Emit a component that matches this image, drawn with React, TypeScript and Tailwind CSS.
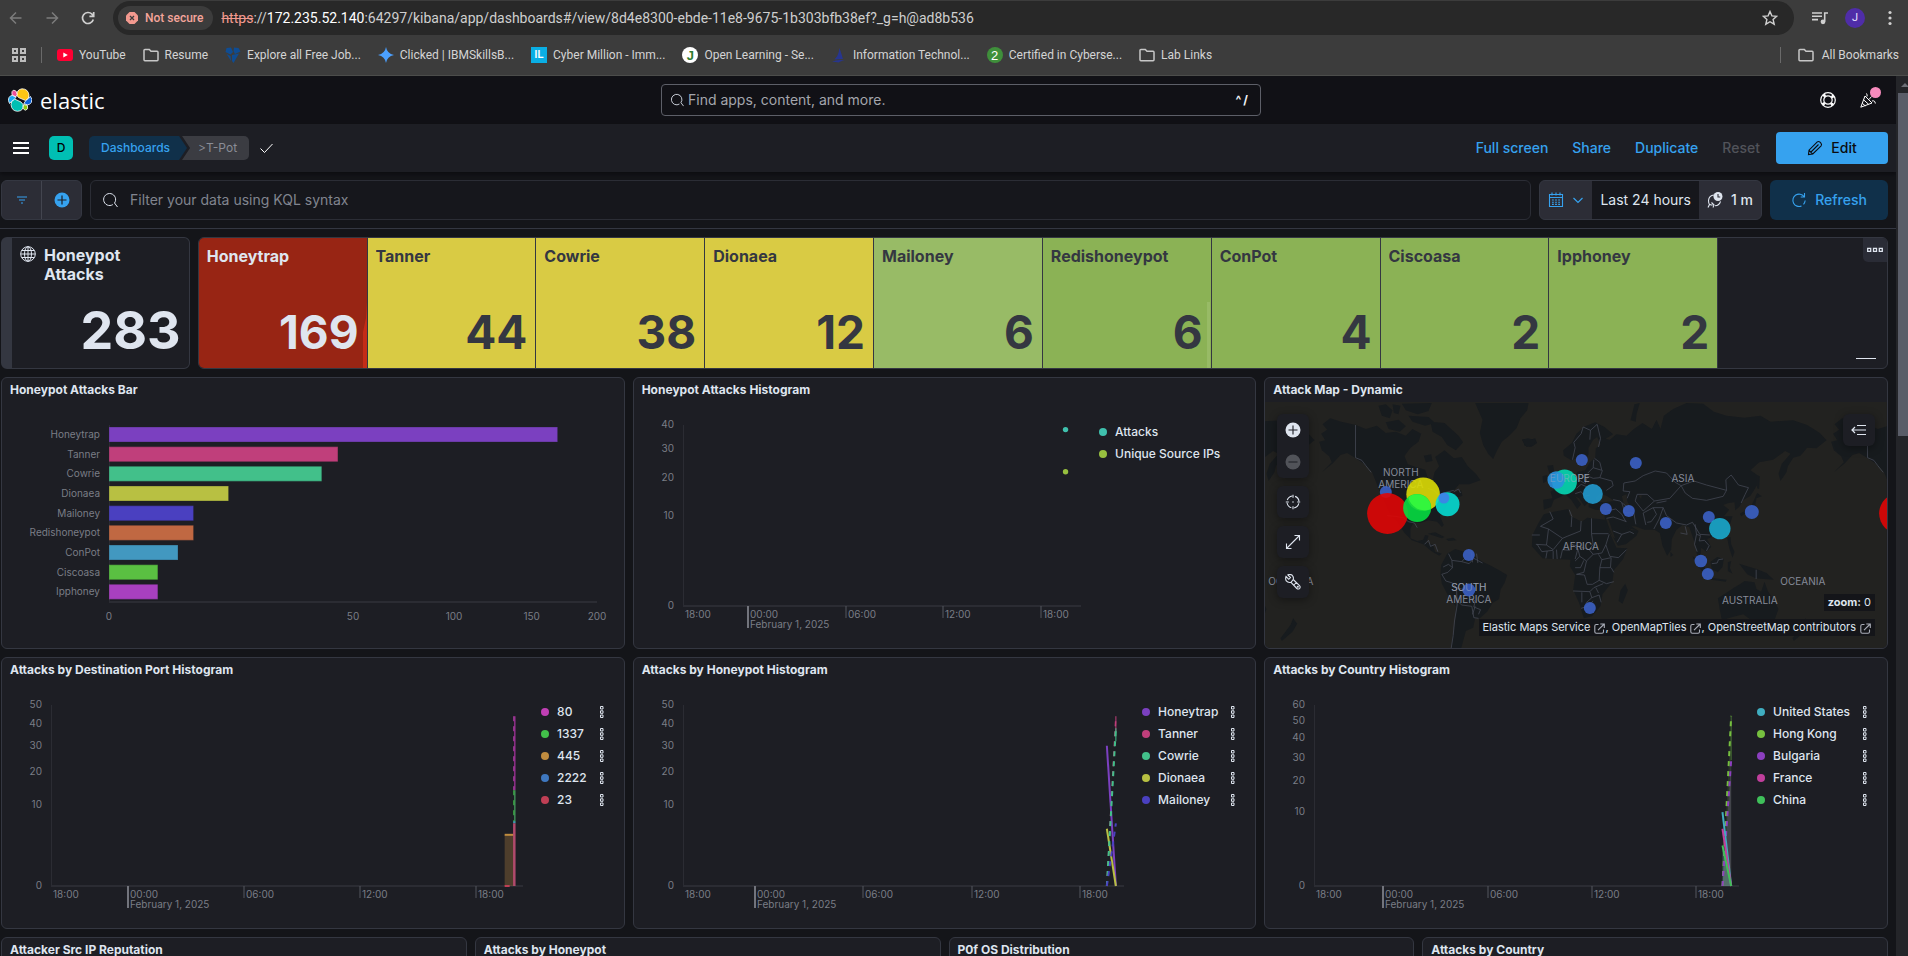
import { useLayoutEffect, useRef, useState, type ReactNode } from "react";

/* ---------- shared helpers ---------- */

function useWidth<T extends HTMLElement>(): [React.RefObject<T | null>, number] {
  const ref = useRef<T>(null);
  const [width, setWidth] = useState(0);
  useLayoutEffect(() => {
    const node = ref.current;
    if (!node) return;
    const update = () => setWidth(Math.round(node.getBoundingClientRect().width));
    update();
    const observer = new ResizeObserver(update);
    observer.observe(node);
    return () => observer.disconnect();
  }, []);
  return [ref, width];
}

function FolderIcon() {
  return (
    <svg className="h-4 w-4" viewBox="0 0 16 16" fill="none" stroke="#c7c7c7" strokeWidth="1.5">
      <path d="M1 3.2v9.6q0 .9.9.9h12.2q.9 0 .9-.9V5.2q0-.9-.9-.9H8L6.300 2.400H1.900q-.9 0-.9.8z" />
    </svg>
  );
}

function MagnifierIcon({ className }: { className: string }) {
  return (
    <svg className={className} viewBox="0 0 16 16" fill="none" stroke="#dfe5ef" strokeWidth="1">
      <path d="M10.800 12.600a6 6 0 1 1 1.700-1.600l3 4" />
    </svg>
  );
}

/* ---------- browser chrome ---------- */

const bookmarks: { label: string; icon: ReactNode }[] = [
  {
    label: "YouTube",
    icon: (
      <svg className="h-4 w-4" viewBox="0 0 16 16">
        <rect x="0" y="2" width="16" height="12" rx="3" fill="#ff0033" />
        <path d="M6.300 5.400v5.200L10.800 8z" fill="#fff" />
      </svg>
    ),
  },
  { label: "Resume", icon: <FolderIcon /> },
  {
    label: "Explore all Free Job...",
    icon: (
      <svg className="h-4 w-4" viewBox="0 0 16 16" fill="#0f4c92">
        <path d="M1.500 1 6 .5 8 5l-2.500 2.500L.5 5zM9 .5l4.500.5 2 3.500L10 7 8.500 4zM1.500 7l4 2 .5 5zM7 8l2.500-.5 4.500-1L8.500 16 7 14z" />
      </svg>
    ),
  },
  {
    label: "Clicked | IBMSkillsB...",
    icon: (
      <svg className="h-4 w-4" viewBox="0 0 16 16" fill="#4ba0ff">
        <path d="M8 0q1 6.500 8 8-7 1.500-8 8-1-6.500-8-8 7-1.500 8-8z" />
      </svg>
    ),
  },
  {
    label: "Cyber Million - Imm...",
    icon: (
      <span className="grid h-4 w-4 place-items-center bg-[#0aaee4] font-['Liberation_Sans'] text-[10px] leading-none font-bold text-white">
        IL
      </span>
    ),
  },
  {
    label: "Open Learning - Se...",
    icon: (
      <span className="grid h-4 w-4 place-items-center rounded-full bg-white font-['Liberation_Sans'] text-[13px] leading-none font-bold text-[#2f7d32]">
        J
      </span>
    ),
  },
  {
    label: "Information Technol...",
    icon: (
      <svg className="h-4 w-4" viewBox="0 0 16 16" fill="#27358f">
        <path d="M8.500 1 12 12l-8.500.5Q7.500 9 8.500 1zM1 14.500q6-2.500 13-1-5 .5-6 2-4-.500-7-1z" />
      </svg>
    ),
  },
  {
    label: "Certified in Cyberse...",
    icon: (
      <span className="grid h-4 w-4 place-items-center rounded-full bg-[#3f8f3b] font-['Liberation_Sans'] text-[13px] leading-none text-white">
        2
      </span>
    ),
  },
  { label: "Lab Links", icon: <FolderIcon /> },
];

function BrowserChrome() {
  return (
    <div className="shrink-0 border-b border-[#4c4d4b] bg-[#3c3c3c] font-['Roboto','Noto_Sans',sans-serif]">
      <div className="flex h-9 items-center pl-2">
        <button aria-label="Back" className="grid h-7 w-4 place-items-center">
          <svg className="h-4 w-4" viewBox="0 0 16 16" fill="none" stroke="#7c7c7c" strokeWidth="1.500">
            <path d="M13.500 8H3M8 2.500 2.500 8 8 13.500" />
          </svg>
        </button>
        <button aria-label="Forward" className="ml-5 grid h-7 w-4 place-items-center">
          <svg className="h-4 w-4" viewBox="0 0 16 16" fill="none" stroke="#7c7c7c" strokeWidth="1.500">
            <path d="M2.500 8H13M8 2.500 13.500 8 8 13.500" />
          </svg>
        </button>
        <button aria-label="Reload" className="ml-5 grid h-7 w-4 place-items-center">
          <svg className="h-4 w-4" viewBox="0 0 16 16" fill="none" stroke="#d0d0d0" strokeWidth="1.700">
            <path d="M13.300 9.500A5.500 5.500 0 1 1 12 4.200L13.500 6M13.700 2v4.300H9.400" />
          </svg>
        </button>
        <div className="ml-[17px] flex h-[34px] min-w-0 flex-1 items-center rounded-full bg-[#282828] pr-4 pl-[5px]">
          <span className="flex h-6 shrink-0 items-center gap-[7px] rounded-full bg-[#3c3c3c] pr-[10px] pl-2 text-xs font-medium text-[#f5a59b]">
            <svg className="h-3 w-3" viewBox="0 0 12 12">
              <path d="M3.500 0h5L12 3.500v5L8.500 12h-5L0 8.500v-5z" fill="#f2998f" />
              <path d="m4 4 4 4m0-4L4 8" stroke="#3c3c3c" strokeWidth="1.300" />
            </svg>
            Not secure
          </span>
          <span className="ml-2 min-w-0 flex-1 truncate text-sm text-[#cfcfcf]">
            <span className="text-[#f2998f] line-through">https</span>://
            <span className="text-white">172.235.52.140</span>
            :64297/kibana/app/dashboards#/view/8d4e8300-ebde-11e8-9675-1b303bfb38ef?_g=h@ad8b536
          </span>
          <button aria-label="Bookmark this page">
            <svg className="h-4 w-4" viewBox="0 0 16 16" fill="none" stroke="#d0d0d0" strokeWidth="1.400">
              <path d="m8 1.500 1.900 4.400 4.800.4-3.600 3.200 1.100 4.700L8 11.700l-4.200 2.500 1.100-4.700L1.300 6.300l4.800-.4z" />
            </svg>
          </button>
        </div>
        <button aria-label="Media controls" className="ml-[18px]">
          <svg className="h-4 w-4" viewBox="0 0 16 16" fill="none" stroke="#d0d0d0" strokeWidth="1.600">
            <path d="M0 3h10M0 6.300h10M0 9.600h6M16 3h-3.300v8.500" />
            <circle cx="11" cy="11.800" r="1.600" fill="#d0d0d0" />
          </svg>
        </button>
        <button
          aria-label="Profile"
          className="ml-[17px] h-5 w-5 rounded-full bg-[#4f2da8] text-[11px] leading-5 text-[#e8e0ff]"
        >
          J
        </button>
        <button aria-label="Browser menu" className="mr-[10px] ml-[17px]">
          <svg className="h-4 w-4" viewBox="0 0 16 16" fill="#d0d0d0">
            <circle cx="8" cy="2.500" r="1.600" />
            <circle cx="8" cy="8" r="1.600" />
            <circle cx="8" cy="13.500" r="1.600" />
          </svg>
        </button>
      </div>
      <div className="flex h-[39px] items-center pb-px pl-[11px] text-xs text-[#d4d4d4]">
        <button aria-label="Apps">
          <svg className="h-4 w-4" viewBox="0 0 16 16" fill="none" stroke="#bdbdbd" strokeWidth="2">
            <path d="M2 2h4v4H2zM10 2h4v4h-4zM2 10h4v4H2zM10 10h4v4h-4z" />
          </svg>
        </button>
        <span className="mr-[15px] ml-[14px] h-4 w-px bg-[#6a6a6a]" />
        <nav className="flex min-w-0 flex-1 items-center gap-[17px] overflow-hidden">
          {bookmarks.map((b) => (
            <a key={b.label} href="#bookmark" className="flex shrink-0 items-center gap-[6px]">
              {b.icon}
              {b.label}
            </a>
          ))}
        </nav>
        <span className="mr-[17px] h-4 w-px bg-[#6a6a6a]" />
        <a href="#all" className="mr-[9px] flex items-center gap-2">
          <FolderIcon />
          All Bookmarks
        </a>
      </div>
    </div>
  );
}

/* ---------- Kibana header ---------- */

function Header() {
  return (
    <header className="flex h-12 shrink-0 items-center justify-between bg-[#111116] px-2">
      <a href="#home" className="flex w-[106px] items-center gap-2">
        <svg className="h-6 w-6" viewBox="0 0 24 24" stroke="#fff" strokeWidth=".8">
          <path d="M9 7.500Q8.500 1.500 14 .8q6 0 7 6.200.500 3.500-3.500 5.500L10.500 9.500z" fill="#fec514" />
          <path d="M15 16.500Q16 23 9.500 23.300 3.500 23 3 16.500q0-4 3.500-5.500l6.500 3z" fill="#00bfb3" />
          <path d="M4.200 7.200Q3 2.500 6 2.200q3 .2 3 4.300l-1 2.300z" fill="#f04e98" />
          <path d="M6.200 11.500Q3.500 13 1.500 15.500-.500 12 1 9.500q1.500-2.500 3.500-2l3.500 1.800z" fill="#1ba9f5" />
          <path d="M18 12.300q3-1.500 4.300-4Q25 11 23.300 14.500q-1.500 2.500-4 2.300l-3.500-1.200z" fill="#0b64dd" />
          <path d="M15.700 16.500l3.800 1q1 4-1.800 4.700-1.900-.2-2.700-2.200z" fill="#93c90e" />
        </svg>
        <span className="font-['Open_Sans','Noto_Sans',sans-serif] text-[22px] leading-6 text-white">elastic</span>
      </a>
      <label className="flex h-8 w-[600px] items-center rounded-[4px] border border-[#5d5f68] bg-[#111116] px-2">
        <MagnifierIcon className="h-[14px] w-[14px] shrink-0" />
        <input
          type="search"
          aria-label="Find apps, content, and more."
          placeholder="Find apps, content, and more."
          className="ml-1 min-w-0 flex-1 bg-transparent text-sm text-[#dfe5ef] outline-none placeholder:text-[#a4a6ad]"
        />
        <span className="mr-1 text-xs font-bold text-[#f0f2f6]">^&thinsp;/</span>
      </label>
      <div className="flex items-center">
        <button aria-label="Help menu" className="grid h-10 w-10 place-items-center">
          <svg className="h-4 w-4" viewBox="0 0 16 16" fill="none" stroke="#fff">
            <circle cx="8" cy="8" r="7.300" strokeWidth="1.200" />
            <circle cx="8" cy="8" r="4.200" strokeWidth="1.200" />
            <circle
              cx="8"
              cy="8"
              r="5.800"
              strokeWidth="2.600"
              strokeDasharray="2.600 6.510"
              strokeDashoffset="-3.255"
            />
          </svg>
        </button>
        <button aria-label="What's new" className="relative grid h-10 w-10 place-items-center">
          <svg className="h-4 w-4" viewBox="0 0 16 16" fill="none" stroke="#fff" strokeWidth="1">
            <path d="M5 4 .8 15.200 12 11zM3.600 7.800l5 4.500M2.300 11.300l3 2.600M6 1.500q1.800.500 1 3M9 7.500l2.500-3M12 9q3-1 3.300 2.500" />
          </svg>
          <span className="absolute top-[7px] right-[7px] h-[11px] w-[11px] rounded-full bg-[#f78bbd]" />
        </button>
      </div>
    </header>
  );
}

function ToolBar() {
  return (
    <div className="flex h-12 shrink-0 items-center bg-[#1d1e24] pr-2 pl-[13px] shadow-[0_2px_4px_#0c0c10]">
      <button aria-label="Toggle primary navigation">
        <svg className="h-4 w-4" viewBox="0 0 16 16" fill="#fff">
          <path d="M0 2h16v2H0zM0 7h16v2H0zM0 12h16v2H0z" />
        </svg>
      </button>
      <button
        aria-label="Default space"
        className="ml-5 h-6 w-6 rounded-[5px] bg-[#00bfb3] text-xs leading-6 font-medium text-black"
      >
        D
      </button>
      <nav aria-label="Breadcrumbs" className="ml-4 flex items-center text-xs">
        <a
          href="#dashboards"
          className="h-6 rounded-l-[5px] bg-[#10304a] pr-[17px] pl-3 leading-6 font-medium text-[#36a2ef] [clip-path:polygon(0_0,calc(100%-8px)_0,100%_50%,calc(100%-8px)_100%,0_100%)]"
        >
          Dashboards
        </a>
        <span className="-ml-[5px] h-6 rounded-r-[5px] bg-[#3b3c42] pr-3 pl-4 leading-6 text-[#8a8d96] [clip-path:polygon(0_0,100%_0,100%_100%,0_100%,8px_50%)]">
          &gt;T-Pot
        </span>
      </nav>
      <svg className="ml-[10px] h-4 w-4" viewBox="0 0 16 16" fill="none" stroke="#fff" strokeWidth="1">
        <path d="m1.500 8.500 4 4L13.500 4" />
      </svg>
      <div className="ml-auto flex items-center gap-6 text-sm font-medium text-[#36a2ef]">
        <button>Full screen</button>
        <button>Share</button>
        <button>Duplicate</button>
        <button disabled className="text-[#51535a]">
          Reset
        </button>
      </div>
      <button className="ml-4 flex h-8 w-28 items-center justify-center gap-2 rounded-[4px] bg-[#36a2ef] text-sm font-medium text-[#0b0c10]">
        <svg className="h-4 w-4" viewBox="0 0 16 16" fill="none" stroke="#0b0c10" strokeWidth="1.100">
          <path d="M1.500 14.500 2 10.200 10.300 1.900q1.300-1 2.700.3l.9.900q1.200 1.300.2 2.700L5.800 14zM4 12l7.500-7.500M2.200 10.500l3.300 3.300" />
        </svg>
        Edit
      </button>
    </div>
  );
}

function QueryBar() {
  return (
    <div className="flex h-[57px] shrink-0 items-center gap-2 border-b border-[#343741] pr-2 pl-px">
      <div className="flex h-10 w-[81px] shrink-0 divide-x divide-[#43454f] overflow-hidden rounded-[6px] border border-[#343741] bg-[#2c2d36]">
        <button aria-label="Saved query menu" className="grid flex-1 place-items-center">
          <svg className="h-4 w-4" viewBox="0 0 16 16" stroke="#36a2ef" strokeWidth="1.200">
            <path d="M3 5h10M5 8h6M7 11h2" />
          </svg>
        </button>
        <button aria-label="Add filter" className="grid flex-1 place-items-center">
          <svg className="h-4 w-4" viewBox="0 0 16 16">
            <circle cx="8" cy="8" r="7.500" fill="#36a2ef" />
            <path d="M8 3.500v9M3.500 8h9" stroke="#1d1e24" strokeWidth="1.200" />
          </svg>
        </button>
      </div>
      <label className="flex h-10 min-w-0 flex-1 items-center rounded-[6px] border border-[#2b2d35] bg-[#16171c] px-[11px]">
        <MagnifierIcon className="h-4 w-4 shrink-0" />
        <input
          type="text"
          aria-label="Filter your data using KQL syntax"
          placeholder="Filter your data using KQL syntax"
          className="ml-3 min-w-0 flex-1 bg-transparent text-sm text-[#dfe5ef] outline-none placeholder:text-[#81858f]"
        />
      </label>
      <div className="flex h-10 shrink-0 overflow-hidden rounded-[6px] border border-[#343741] bg-[#2c2d36] text-sm text-[#dfe5ef]">
        <button aria-label="Date quick select" className="flex w-[52px] items-center justify-center gap-2">
          <svg className="h-4 w-4" viewBox="0 0 16 16" fill="none" stroke="#36a2ef" strokeWidth="1.100">
            <path d="M1.500 2.500h13v12h-13zM1.500 5.500h13M4 .5v3m4-3v3m4-3v3" />
            <path d="M4 8h8M4 10.200h8M4 12.400h8" strokeDasharray="1.800 1.300" />
          </svg>
          <svg className="h-3 w-3" viewBox="0 0 12 12" fill="none" stroke="#36a2ef" strokeWidth="1.200">
            <path d="m1.500 4 4.500 4.500L10.500 4" />
          </svg>
        </button>
        <button className="bg-[#16171c] px-2">Last 24 hours</button>
        <button className="flex items-center gap-2 px-2 font-medium">
          <svg className="h-4 w-4" viewBox="0 0 16 16" fill="none" stroke="#dfe5ef" strokeWidth="1.100">
            <path d="M7 3q-5 .5-5.500 5.500 0 2.500 1 4M1 15.500l1.500-3 3 .8M8 13.800q4.500-.5 5.500-4.500M4.500 10.500 7 13l-1 2.500" />
            <circle cx="11" cy="4.500" r="4.500" fill="#dfe5ef" stroke="none" />
            <path d="M11 2v3h2.200" stroke="#2c2d36" />
          </svg>
          1 m
        </button>
      </div>
      <button className="flex h-10 w-[118px] shrink-0 items-center justify-center gap-2 rounded-[6px] bg-[#10304a] text-sm font-medium text-[#36a2ef]">
        <svg className="h-4 w-4" viewBox="0 0 16 16" fill="none" stroke="#36a2ef" strokeWidth="1.100">
          <path d="M10.500 14A6.200 6.200 0 1 1 13 4.500M13.500 1v4H9.700M14.200 8.500q-.2 2-1.700 3.800" />
        </svg>
        Refresh
      </button>
    </div>
  );
}

/* ---------- panels ---------- */

function Panel({ title, children, className = "" }: { title: string; children?: ReactNode; className?: string }) {
  return (
    <section
      className={
        "flex h-[272px] min-w-0 flex-col overflow-hidden rounded-[6px] border border-[#343741] bg-[#1d1e24] " + className
      }
    >
      <h2 className="h-6 shrink-0 truncate px-2 text-xs leading-6 font-bold text-[#dfe5ef]">{title}</h2>
      {children}
    </section>
  );
}

const metricTiles = [
  { name: "Honeytrap", value: 169, tone: "bg-[#982514] text-[#dfe5ef]" },
  { name: "Tanner", value: 44, tone: "bg-[#d9cb44] text-[#343741]" },
  { name: "Cowrie", value: 38, tone: "bg-[#d9cb44] text-[#343741]" },
  { name: "Dionaea", value: 12, tone: "bg-[#d9cb44] text-[#343741]" },
  { name: "Mailoney", value: 6, tone: "bg-[#98bb66] text-[#343741]" },
  { name: "Redishoneypot", value: 6, tone: "bg-[#8bb255] text-[#343741]", trend: "#98bb66" },
  { name: "ConPot", value: 4, tone: "bg-[#8bb255] text-[#343741]" },
  { name: "Ciscoasa", value: 2, tone: "bg-[#8bb255] text-[#343741]" },
  { name: "Ipphoney", value: 2, tone: "bg-[#8bb255] text-[#343741]" },
];

function MetricRow() {
  return (
    <div className="flex h-[132px] gap-2">
      <section className="flex w-[10%] shrink-0 flex-col justify-between overflow-hidden rounded-[6px] border border-l-[11px] border-[#343741] bg-[#1d1e24] p-2 text-[#dfe5ef]">
        <div className="flex gap-2">
          <svg className="h-4 w-4 shrink-0" viewBox="0 0 16 16" fill="none" stroke="#dfe5ef" strokeWidth="1">
            <circle cx="8" cy="8" r="7.300" />
            <ellipse cx="8" cy="8" rx="3.500" ry="7.300" />
            <path d="M8 .7v14.600M.7 8h14.600M1.800 4.500h12.400M1.800 11.500h12.400" />
          </svg>
          <h2 className="text-base leading-[19px] font-bold">Honeypot Attacks</h2>
        </div>
        <p className="text-right text-[52px] leading-[58px] font-bold">283</p>
      </section>
      <section className="grid flex-1 grid-cols-10 overflow-hidden rounded-[6px] border border-[#343741] bg-[#1d1e24]">
        {metricTiles.map((tile) => (
          <div
            key={tile.name}
            className={"relative flex min-w-0 flex-col justify-between border-r border-[#343741] p-2 " + tile.tone}
          >
            <h2 className="truncate text-base leading-5 font-bold">{tile.name}</h2>
            <p className="text-right text-[46px] leading-[56px] font-bold">{tile.value}</p>
            {tile.name === "Honeytrap" && (
              <svg className="absolute right-0 bottom-0 h-[66px] w-1" viewBox="0 0 4 66" fill="#c42c17">
                <path d="M4 0 3 16 0 30V66H4z" />
              </svg>
            )}
            {tile.trend && (
              <svg className="absolute right-0 bottom-0 h-[66px] w-1" viewBox="0 0 4 66" fill={tile.trend}>
                <path d="M0 0H3V66H0z" />
              </svg>
            )}
          </div>
        ))}
        <div className="flex flex-col items-end justify-between">
          <button aria-label="Panel options" className="grid h-6 w-6 place-items-center rounded-bl-[5px] bg-[#2a2c36]">
            <svg className="h-4 w-4" viewBox="0 0 16 16" fill="none" stroke="#dfe5ef" strokeWidth="1.300">
              <path d="M.7 6.300h3v3h-3zM6.500 6.300h3v3h-3zM12.300 6.300h3v3h-3z" />
            </svg>
          </button>
          <span className="mr-[11px] mb-[9px] h-px w-5 bg-[#dfe5ef]" />
        </div>
      </section>
    </div>
  );
}

const bars = [
  { name: "Honeytrap", value: 169, color: "#7b40c0" },
  { name: "Tanner", value: 44, color: "#c03f7b" },
  { name: "Cowrie", value: 38, color: "#42c08a" },
  { name: "Dionaea", value: 12, color: "#b8c042" },
  { name: "Mailoney", value: 6, color: "#4a40c0" },
  { name: "Redishoneypot", value: 6, color: "#c06842" },
  { name: "ConPot", value: 4, color: "#4298c0" },
  { name: "Ciscoasa", value: 2, color: "#5ac042" },
  { name: "Ipphoney", value: 2, color: "#a840c0" },
];

function BarChart() {
  const [ref, width] = useWidth<HTMLDivElement>();
  const left = 107;
  const span = Math.max(width - left - 27, 0);
  const x = (v: number) => left + Math.sqrt(v / 200) * span;
  return (
    <div ref={ref} className="min-w-0 flex-1">
      {width > 0 && (
        <svg width={width} height="246" fontSize="10" fill="#7a7d86">
          <path d={`M${left + 0.5} 23V200`} stroke="#2b2c33" fill="none" />
          <path d={`M${left} 200H${left + span}`} stroke="#2b2c33" strokeWidth="2" fill="none" />
          {bars.map((bar, i) => (
            <g key={bar.name}>
              <text x={left - 9} y={36 + i * 19.67} textAnchor="end">
                {bar.name}
              </text>
              <rect
                x={left + 0.5}
                y={25.5 + i * 19.67}
                width={x(bar.value) - left - 1}
                height="14"
                fill={bar.color}
                stroke={bar.color}
                strokeOpacity=".7"
              />
            </g>
          ))}
          {[0, 50, 100, 150, 200].map((v) => (
            <text key={v} x={x(v)} y="218" textAnchor="middle">
              {v}
            </text>
          ))}
        </svg>
      )}
    </div>
  );
}

type Plot = { x: (hour: number) => number; y: (value: number) => number };
type LegendItem = { name: string; color: string };

const START = -3.99;
const END = 20.45;

function TimeChart({
  ticks,
  legend,
  actions = true,
  children,
}: {
  ticks: number[];
  legend: LegendItem[];
  actions?: boolean;
  children: (plot: Plot) => ReactNode;
}) {
  const [ref, width] = useWidth<HTMLDivElement>();
  const left = 49;
  const base = 204;
  const max = ticks[ticks.length - 1];
  const span = Math.max(width - left - 18, 0);
  const plot: Plot = {
    x: (h) => left + ((h - START) / (END - START)) * span,
    y: (v) => base - Math.sqrt(v / max) * 181,
  };
  return (
    <div className="flex min-h-0 flex-1">
      <div ref={ref} className="min-w-0 flex-1">
        {width > 0 && (
          <svg width={width} height="246" fontSize="10" fill="#7a7d86">
            <path d={`M${left + 0.5} 23V${base}`} stroke="#2b2c33" fill="none" />
            <path d={`M${left} ${base}H${left + span}`} stroke="#2b2c33" strokeWidth="2" fill="none" />
            {ticks.map((v) => (
              <text key={v} x={left - 9} y={plot.y(v) + 3} textAnchor="end">
                {v}
              </text>
            ))}
            <text x={left + 2} y="216">
              18:00
            </text>
            {[0, 6, 12, 18].map((h) => {
              const tx = Math.round(plot.x(h));
              return (
                <g key={h}>
                  <path
                    d={`M${tx} ${base}V${h === 0 ? 226 : 216}`}
                    stroke={h === 0 ? "#72747c" : "#55575e"}
                    strokeWidth={h === 0 ? 2 : 1}
                  />
                  <text x={tx + 2} y="216">
                    {String(h).padStart(2, "0")}:00
                  </text>
                </g>
              );
            })}
            <text x={Math.round(plot.x(0)) + 2} y="226">
              February 1, 2025
            </text>
            {children(plot)}
          </svg>
        )}
      </div>
      <ul className={"flex shrink-0 flex-col pt-[19px] text-xs text-[#dfe5ef] " + (actions ? "pr-[18px]" : "pr-[35px]")}>
        {legend.map((item) => (
          <li key={item.name} className="flex h-[22px] items-center">
            <svg className="mr-2 h-2 w-2" viewBox="0 0 8 8">
              <circle cx="4" cy="4" r="4" fill={item.color} />
            </svg>
            <span className="flex-1 font-medium">{item.name}</span>
            {actions && (
              <button aria-label={"Options for " + item.name} className="ml-[11px] grid h-4 w-2 place-items-center">
                <svg className="h-3 w-1" viewBox="0 0 4 12" fill="none" stroke="#dfe5ef" strokeWidth="1">
                  <path d="M.5.500h2.500v2.500H.5zM.5 4.800h2.500v2.500H.5zM.5 9h2.500v2.500H.5z" />
                </svg>
              </button>
            )}
          </li>
        ))}
      </ul>
    </div>
  );
}

function line(p: Plot, from: number, to: number) {
  return `M${p.x(19.5)} ${p.y(from)}L${p.x(20)} ${p.y(to)}`;
}

function AttacksHistogram() {
  return (
    <TimeChart
      ticks={[0, 10, 20, 30, 40]}
      actions={false}
      legend={[
        { name: "Attacks", color: "#3fc0ad" },
        { name: "Unique Source IPs", color: "#97c03f" },
      ]}
    >
      {(p) => (
        <>
          <circle cx={p.x(19.5)} cy={p.y(38)} r="2.700" fill="#3fc0ad" />
          <circle cx={p.x(19.5)} cy={p.y(22)} r="2.700" fill="#97c03f" />
        </>
      )}
    </TimeChart>
  );
}

function PortHistogram() {
  return (
    <TimeChart
      ticks={[0, 10, 20, 30, 40, 50]}
      legend={[
        { name: "80", color: "#c03fb4" },
        { name: "1337", color: "#42c04a" },
        { name: "445", color: "#c08c3f" },
        { name: "2222", color: "#3f78c0" },
        { name: "23", color: "#c03f55" },
      ]}
    >
      {(p) => {
        const a = p.x(19.5);
        const b = p.x(20);
        return (
          <>
            <rect x={a} y={p.y(4)} width={b - a} height={p.y(0) - p.y(4)} fill="#c08c3f" fillOpacity=".3" />
            <path d={`M${a} ${p.y(4)}H${b}`} stroke="#c08c3f" strokeWidth="2" />
            <path d={`M${b + 0.5} ${p.y(44)}V${p.y(14)}`} stroke="#8f3088" strokeWidth="1.500" />
            <path d={`M${b - 0.5} ${p.y(44)}V${p.y(14)}`} stroke="#c03fb4" strokeDasharray="5 5" />
            <path d={`M${b + 0.5} ${p.y(14)}V${p.y(6)}`} stroke="#3f8a55" strokeWidth="1.500" />
            <path d={`M${b - 0.5} ${p.y(14)}V${p.y(6)}`} stroke="#42c04a" strokeDasharray="5 5" />
            <path d={`M${b} ${p.y(6.4)}V${p.y(6)}`} stroke="#3f8fc0" strokeWidth="2" />
            <path d={`M${b} ${p.y(6)}V${p.y(0)}`} stroke="#b04a6c" strokeWidth="2.500" />
            <path d={`M${a} ${p.y(0)}h5`} stroke="#c03f55" strokeWidth="2" />
          </>
        );
      }}
    </TimeChart>
  );
}

function HoneypotHistogram() {
  return (
    <TimeChart
      ticks={[0, 10, 20, 30, 40, 50]}
      legend={[
        { name: "Honeytrap", color: "#7b40c0" },
        { name: "Tanner", color: "#c03f7b" },
        { name: "Cowrie", color: "#42c08a" },
        { name: "Dionaea", color: "#b8c042" },
        { name: "Mailoney", color: "#4a40c0" },
      ]}
    >
      {(p) => (
        <g fill="none" strokeWidth="2">
          <path d={line(p, 0, 44)} stroke="#c03f7b" strokeDasharray="5 5" strokeWidth="1.500" />
          <path d={`M${p.x(20)} ${p.y(44)}V${p.y(36)}`} stroke="#c03f7b" strokeWidth="1" />
          <path d={line(p, 30, 0)} stroke="#7b40c0" />
          <path d={line(p, 5, 0)} stroke="#b8c042" />
          <path d={line(p, 0, 38)} stroke="#42c08a" strokeDasharray="5 5" />
          <path d={`M${p.x(20)} ${p.y(38)}V${p.y(32)}`} stroke="#42c08a" strokeWidth="1" />
          <path d={line(p, 0, 6)} stroke="#4a40c0" strokeDasharray="5 5" />
        </g>
      )}
    </TimeChart>
  );
}

function CountryHistogram() {
  return (
    <TimeChart
      ticks={[0, 10, 20, 30, 40, 50, 60]}
      legend={[
        { name: "United States", color: "#3fadc0" },
        { name: "Hong Kong", color: "#76c03f" },
        { name: "Bulgaria", color: "#8c3fc0" },
        { name: "France", color: "#c03f9c" },
        { name: "China", color: "#3fc05a" },
      ]}
    >
      {(p) => {
        const area = (from: number, to: number) => line(p, from, to) + `V${p.y(0)}H${p.x(19.5)}Z`;
        return (
          <g fill="none" strokeWidth="2">
            <path d={area(0, 53)} fill="#76c03f" fillOpacity=".14" />
            <path d={area(0, 29)} fill="#8c6fb0" fillOpacity=".25" />
            <path d={area(3, 0)} fill="#6fb0a0" fillOpacity=".4" />
            <path d={`M${p.x(20)} ${p.y(53)}V${p.y(29)}`} stroke="#456b35" strokeWidth="1" />
            <path d={line(p, 0, 53)} stroke="#76c03f" strokeDasharray="5 5" />
            <path d={line(p, 0, 29)} stroke="#8c3fc0" strokeDasharray="5 5" />
            <path d={line(p, 10, 0)} stroke="#3fadc0" />
            <path d={line(p, 6, 0)} stroke="#c03f9c" />
            <path d={line(p, 3, 0)} stroke="#3fc05a" />
          </g>
        );
      }}
    </TimeChart>
  );
}

/* ---------- map ---------- */

const landAmericas = [
  "M172 122 190 118 178 98 196 86 182 70 205 52 238 62 282 72 312 84 345 74 372 96 402 92 432 104 452 84 478 98 470 122 446 140 428 165 438 190 462 198 490 206 498 232 512 242 518 214 532 196 520 168 548 148 576 172 600 168 618 196 642 218 656 238 622 250 592 250 570 276 598 268 602 284 574 294 558 306 548 326 534 346 546 372 540 378 526 362 500 358 476 366 456 364 446 382 446 412 466 420 484 416 490 402 500 404 494 424 514 432 520 452 540 458 532 464 508 450 484 430 450 418 428 396 406 362 388 346 376 320 366 298 352 268 340 236 330 212 306 188 282 172 256 156 236 162 214 186 180 214 210 184 202 166 180 148Z",
  "M350 14 372 10 392 28 384 52 360 44ZM372 64 410 56 432 76 414 92 380 84ZM420 8 510 6 500 30 468 40 432 28ZM440 44 500 48 520 66 490 74 452 62ZM506 62 548 66 590 104 604 124 582 148 556 132 540 108 512 92ZM392 10 416 14 410 40 396 36ZM486 164 508 160 512 180 492 184Z",
  "M640 6 800 6 796 28 776 52 764 82 742 104 720 122 706 148 694 174 680 160 664 132 654 96 662 56Z",
  "M782 114 800 118 820 112 826 126 808 138 788 134Z",
  "M498 398 520 394 548 408 540 412ZM552 414 574 410 584 418 560 420Z",
  "M538 492 556 458 580 444 606 452 636 464 662 482 690 496 712 508 736 522 728 546 716 566 712 594 692 606 676 632 654 652 640 652 634 680 612 690 604 720 598 742 568 742 572 708 580 660 582 616 560 586 540 548 536 520Z",
];

const landOldWorld = [
  "M162 164 160 148 186 126 200 98 226 76 256 64 284 78 310 100 290 112 282 122 262 108 250 116 236 140 236 160 224 186 212 198 200 172 184 178Z",
  "M262 108 300 116 320 100 350 104 372 84 398 66 426 84 440 56 452 84 462 44 490 24 530 6 580 8 612 32 650 44 704 50 752 44 782 62 850 58 892 72 930 96 950 118 920 142 892 140 872 164 850 170 834 196 830 214 812 240 806 218 816 188 842 158 826 150 790 176 748 184 722 208 742 222 742 252 722 284 700 298 688 318 676 328 674 304 656 306 640 312 658 326 642 346 668 346 658 378 634 402 606 408 592 414 604 438 590 452 574 440 572 462 584 486 574 486 560 456 556 430 546 400 538 378 518 372 500 386 486 414 484 446 472 464 458 434 450 396 434 386 404 386 376 376 364 376 386 390 380 404 348 430 324 434 308 406 290 372 284 346 290 328 256 326 236 318 238 302 224 316 208 292 196 286 214 310 202 324 184 296 166 280 152 288 132 296 124 318 102 326 100 296 128 292 122 272 138 262 162 242 188 234 204 212 226 208 240 184 256 170 258 142 272 132Z",
  "M112 194 130 192 134 220 146 240 140 252 118 256 122 228ZM98 226 112 222 112 240 100 246Z",
  "M102 340 132 332 176 324 180 344 216 362 232 350 286 356 300 396 320 440 352 442 340 474 312 508 308 542 278 580 272 616 246 646 222 652 208 606 190 566 196 522 180 496 182 476 132 474 98 472 66 436 68 402 86 366Z",
  "M346 548 354 568 338 608 326 600 332 568ZM482 452 490 462 482 468Z",
  "M548 466 568 480 602 520 592 526 560 492ZM602 482 622 468 642 474 638 498 624 514 606 504ZM600 530 650 536 648 542 604 536ZM654 484 664 480 660 500 668 518 654 510ZM688 488 712 496 740 504 770 516 792 536 762 534 738 532 712 520ZM652 410 662 408 664 430 674 452 668 470 658 440ZM646 390 652 394 646 402Z",
  "M742 222 750 226 748 264 742 262ZM742 276 756 286 740 292 734 322 712 334 694 346 690 338 722 320Z",
  "M624 592 652 574 672 560 690 550 704 540 734 544 740 564 754 572 764 542 774 570 794 600 806 624 796 652 784 676 756 680 728 660 700 640 668 648 636 658 630 626Z",
  "M362 58 374 10 390 6 380 40 378 62ZM36 116 54 112 78 118 72 132 50 138Z",
  "M878 672 886 652 898 668 884 692 852 720 848 712Z",
];

const bordersAmericas =
  "M281 72V170L300 178 312 194 328 214M376 344 400 346 424 350 440 362 458 366 466 380M498 262 516 268 530 282 552 274 576 268M576 272 590 264 596 276M488 430 500 418 506 436 520 430 528 452M560 458 570 478 600 482 610 470M570 478 572 500 558 514 540 520M572 500 560 490 544 498M600 482 622 488 636 472 662 486M628 452 632 484M644 458 648 486M540 520 552 540 572 546 584 560 600 564 620 584 640 600 636 618 656 626 650 640M584 560 586 612 578 660 574 704 568 742M586 600 600 612 630 616 636 650 650 652M640 616 632 640";

const bordersOldWorld =
  "M188 176 196 140 192 124 214 98 220 78 242 88 240 116M242 88 262 70 272 112 266 138M234 216 250 200 276 208 270 184 254 172M250 200 252 176M226 222 250 232 270 230 278 208M270 230 306 240 310 254 290 268M200 262 214 250 232 258 250 250M196 278 214 272 224 286 240 282M232 230 226 248 206 236M340 270 342 246 376 240 400 224 436 210 470 216 496 244 514 254 552 240 590 252 650 268 640 286 590 298 548 292 526 276 514 254M650 268 648 236 664 222 686 252 716 260 706 280 694 306M340 270 360 272 352 292M376 300 382 280 412 280 434 300 480 292 514 254M352 318 330 300 310 296M376 300 400 330 434 300M400 336 430 320 460 320 470 344 500 366 530 372 548 364 570 400 600 402M400 336 408 372M430 320 440 340 424 362 412 364M460 320 448 354 432 384M440 306 470 300M336 306 346 336 372 336 378 370M290 330 318 324 336 340 348 362M290 352 310 348 350 362M310 390 336 400 360 392 372 398M336 400 322 424M526 376 532 400 512 396M556 370 560 400 572 404 568 420 584 418 598 434 590 450M560 400 554 430 562 452M606 488 622 486 626 476 640 474M739 506V534M120 332 130 354 92 376M92 376 116 384 110 432 78 430M116 384 158 412 172 406 212 390 214 360M178 326 186 346 184 378M245 352V398H296M245 398 250 430 238 446 186 430M110 432 130 446 158 412M66 402H90M82 430 96 452 112 450M108 472 112 450 130 448M130 474V450M142 474 140 446M152 472 158 446 180 448M196 474 204 444 186 430M204 444 210 466 196 480M238 446 250 460 276 456 288 432 298 400M288 432 300 466 326 470 350 446M210 466 230 480 250 460M196 500 212 500 222 478M230 480 222 514 200 520 224 522 232 550 248 550 268 538 270 500 276 476 266 460M276 476 304 470 302 500 270 500M304 500 312 514M268 538 290 548 312 542M190 570 240 572 252 560 280 548M216 604V574M240 572 246 590 228 606M246 590 268 582 274 604M214 622 232 616 250 600M258 560 266 576";

function WorldMap() {
  const copies = [-512, 0, 512];
  return (
    <svg className="h-full w-full" viewBox="0 -1 622 246" preserveAspectRatio="xMidYMid slice" aria-label="World map">
      <rect y="-2" width="622" height="250" fill="#222220" />
      {copies.map((dx) => (
        <g key={dx} transform={`translate(${dx - 3} -2) scale(.33333)`} strokeLinejoin="round">
          <g fill="#171b1e">
            {landAmericas.map((d) => (
              <path key={d} d={d} />
            ))}
          </g>
          <path d={bordersAmericas} fill="none" stroke="#474c58" strokeWidth="2.200" />
          <g transform="translate(744 0)">
            <g fill="#171b1e">
              {landOldWorld.map((d) => (
                <path key={d} d={d} />
              ))}
            </g>
            <path
              d="M256 290 270 278 290 284 314 300 284 304 262 302ZM336 286 350 280 352 300 362 318 352 330 342 310ZM288 352 296 356 316 412 308 408ZM346 374 362 384 384 388 366 388ZM386 284 396 282 394 294Z"
              fill="#222220"
            />
            <path d={bordersOldWorld} fill="none" stroke="#474c58" strokeWidth="2.200" />
          </g>
        </g>
      ))}
      <g fill="#868b99" fontSize="10" textAnchor="middle">
        <text x="136" y="73">NORTH</text>
        <text x="136" y="85">AMERICA</text>
        <text x="204" y="188">SOUTH</text>
        <text x="204" y="200">AMERICA</text>
        <text x="305" y="79">EUROPE</text>
        <text x="418" y="79">ASIA</text>
        <text x="316" y="147">AFRICA</text>
        <text x="485" y="201">AUSTRALIA</text>
        <text x="538" y="182">OCEANIA</text>
        <text x="26" y="182">OCEANIA</text>
      </g>
      <g fillOpacity=".9">
        <g fill="#3b61c4">
          <circle cx="121" cy="89" r="6" />
          <circle cx="204" cy="152" r="6" />
          <circle cx="204" cy="187" r="6.500" />
          <circle cx="317" cy="57" r="6" />
          <circle cx="371" cy="60" r="6" />
          <circle cx="341" cy="106" r="6" />
          <circle cx="364" cy="108" r="6" />
          <circle cx="401" cy="120" r="6" />
          <circle cx="444" cy="114" r="6" />
          <circle cx="436" cy="158" r="6.300" />
          <circle cx="443" cy="171" r="6" />
          <circle cx="325" cy="205" r="6" />
          <circle cx="487" cy="109" r="7" />
        </g>
        <circle cx="122.700" cy="110.500" r="20.400" fill="#df0505" />
        <circle cx="634.700" cy="110.500" r="20.400" fill="#df0505" />
        <circle cx="158.300" cy="91.300" r="16.800" fill="#dcdc05" />
        <circle cx="152.300" cy="105" r="14" fill="#05dc40" />
        <path d="M143.500 94.400a14 14 0 0 1 21.500 4.600 14 14 0 0 1 .8 7.300 16.800 16.800 0 0 1-22.300-11.900z" fill="#36f83e" />
        <circle cx="182.700" cy="101.300" r="12" fill="#05dcd2" />
        <circle cx="179" cy="95" r="5.500" fill="#3f7fe8" />
        <circle cx="299.700" cy="79" r="12.400" fill="#05d8b2" />
        <circle cx="291.300" cy="77" r="8.700" fill="#2b90dd" />
        <circle cx="328" cy="91" r="10" fill="#219ace" />
        <circle cx="455" cy="125.600" r="10.700" fill="#19a8cc" />
      </g>
      <g fill="#9aa4b8" fillOpacity=".5" fontSize="10" textAnchor="middle">
        <text x="305" y="79">EUROPE</text>
        <text x="204" y="188">SOUTH</text>
      </g>
    </svg>
  );
}

const mapButton = "grid h-8 w-8 place-items-center rounded-[6px] bg-[#1d1e24] shadow-[0_2px_8px_#00000066]";

function ExternalIcon() {
  return (
    <svg className="ml-1 inline h-[11px] w-[11px]" viewBox="0 0 11 11" fill="none" stroke="#a9adb8" strokeWidth="1.100">
      <path d="M4.500 1.500H2.300q-1.500 0-1.500 1.500v5.700q0 1.500 1.500 1.500H8q1.500 0 1.500-1.500V6.500M6.300 1h4v4M10.200 1 4 7.200" />
    </svg>
  );
}

function AttackMap() {
  return (
    <div className="relative min-h-0 flex-1">
      <WorldMap />
      <div className="absolute top-3 left-3 flex flex-col gap-2">
        <div className="flex flex-col rounded-[6px] bg-[#1d1e24] shadow-[0_2px_8px_#00000066]">
          <button aria-label="Zoom in" className="grid h-8 w-8 place-items-center">
            <svg className="h-4 w-4" viewBox="0 0 16 16">
              <circle cx="8" cy="8" r="7.500" fill="#dfe5ef" />
              <path d="M8 3.500v9M3.500 8h9" stroke="#1d1e24" strokeWidth="1.100" />
            </svg>
          </button>
          <button aria-label="Zoom out" disabled className="grid h-8 w-8 place-items-center">
            <svg className="h-4 w-4" viewBox="0 0 16 16">
              <circle cx="8" cy="8" r="7.500" fill="#515359" />
              <path d="M3.500 8h9" stroke="#1d1e24" strokeWidth="1.100" />
            </svg>
          </button>
        </div>
        <button aria-label="Fit to data bounds" className={mapButton}>
          <svg className="h-4 w-4" viewBox="0 0 16 16" fill="none" stroke="#dfe5ef" strokeWidth="1.100">
            <circle cx="8" cy="8" r="6" strokeDasharray="6.400 3" strokeDashoffset="-1.500" />
            <path d="M8 .8v3M8 12.200v3M.8 8h3M12.200 8h3M7.200 8h1.600" />
          </svg>
        </button>
        <button aria-label="Fit to extent" className={mapButton}>
          <svg className="h-4 w-4" viewBox="0 0 16 16" fill="none" stroke="#dfe5ef" strokeWidth="1.100">
            <path d="M9.500 1.500h5v5M14.500 1.500l-13 13M1.500 9.500v5h5" />
          </svg>
        </button>
        <button aria-label="Map tools" className={mapButton}>
          <svg className="h-4 w-4" viewBox="0 0 16 16" fill="none" stroke="#dfe5ef" strokeWidth="1.100">
            <path d="M1 2.500 3.800 5.300 5.500 3.600 2.800.9Q5-.3 7.200 1.300 9 3.200 8.200 5.500l6.300 6q1.200 1.500.2 2.800-1.400 1.300-2.900.2L6 8.300Q3 9 1.300 6.900.200 4.800 1 2.500zM6 8.300l2.200-2.800M9 11l2.300-2.500" />
            <circle cx="12.800" cy="12.700" r=".5" />
          </svg>
        </button>
      </div>
      <div className="absolute top-3 right-3">
        <button aria-label="Expand layers panel" className={mapButton}>
          <svg className="h-4 w-4" viewBox="0 0 16 16" fill="none" stroke="#dfe5ef" strokeWidth="1.200">
            <path d="M6 3.500h9M1.500 8H15M6 12.500h9M4 5 1 8l3 3" />
          </svg>
        </button>
      </div>
      <div className="absolute right-3 bottom-3 flex flex-col items-end gap-2 text-[11px] leading-[17px] text-[#dfe5ef]">
        <p className="bg-[#141519] px-1">
          <b>zoom:</b> 0
        </p>
        <p className="bg-[#141519] px-1">
          <a href="#ems">
            Elastic Maps Service
            <ExternalIcon />
          </a>
          ,{" "}
          <a href="#omt">
            OpenMapTiles
            <ExternalIcon />
          </a>
          ,{" "}
          <a href="#osm">
            OpenStreetMap contributors
            <ExternalIcon />
          </a>
        </p>
      </div>
    </div>
  );
}

/* ---------- page ---------- */

function ScrollBar() {
  return (
    <div className="flex w-3 shrink-0 flex-col bg-[#242529] pl-[2px]" aria-hidden="true">
      <svg className="h-[17px] w-[10px]" viewBox="0 0 10 17" fill="#6b6e76">
        <path d="M3 11h8L7 7z" />
      </svg>
      <div className="h-[39%] bg-[#5a5d68]" />
    </div>
  );
}

export default function App() {
  return (
    <div className="flex h-screen flex-col overflow-hidden bg-[#141519] font-['Inter','Noto_Sans',sans-serif]">
      <BrowserChrome />
      <div className="flex min-h-0 flex-1">
        <div className="flex min-w-0 flex-1 flex-col overflow-hidden">
          <Header />
          <ToolBar />
          <QueryBar />
          <main className="flex flex-col gap-2 pt-2 pr-2 pl-px">
            <MetricRow />
            <div className="grid grid-cols-3 gap-2">
              <Panel title="Honeypot Attacks Bar">
                <BarChart />
              </Panel>
              <Panel title="Honeypot Attacks Histogram">
                <AttacksHistogram />
              </Panel>
              <Panel title="Attack Map - Dynamic">
                <AttackMap />
              </Panel>
              <Panel title="Attacks by Destination Port Histogram">
                <PortHistogram />
              </Panel>
              <Panel title="Attacks by Honeypot Histogram">
                <HoneypotHistogram />
              </Panel>
              <Panel title="Attacks by Country Histogram">
                <CountryHistogram />
              </Panel>
            </div>
            <div className="grid grid-cols-4 gap-2">
              <Panel title="Attacker Src IP Reputation" />
              <Panel title="Attacks by Honeypot" />
              <Panel title="P0f OS Distribution" />
              <Panel title="Attacks by Country" />
            </div>
          </main>
        </div>
        <ScrollBar />
      </div>
    </div>
  );
}
